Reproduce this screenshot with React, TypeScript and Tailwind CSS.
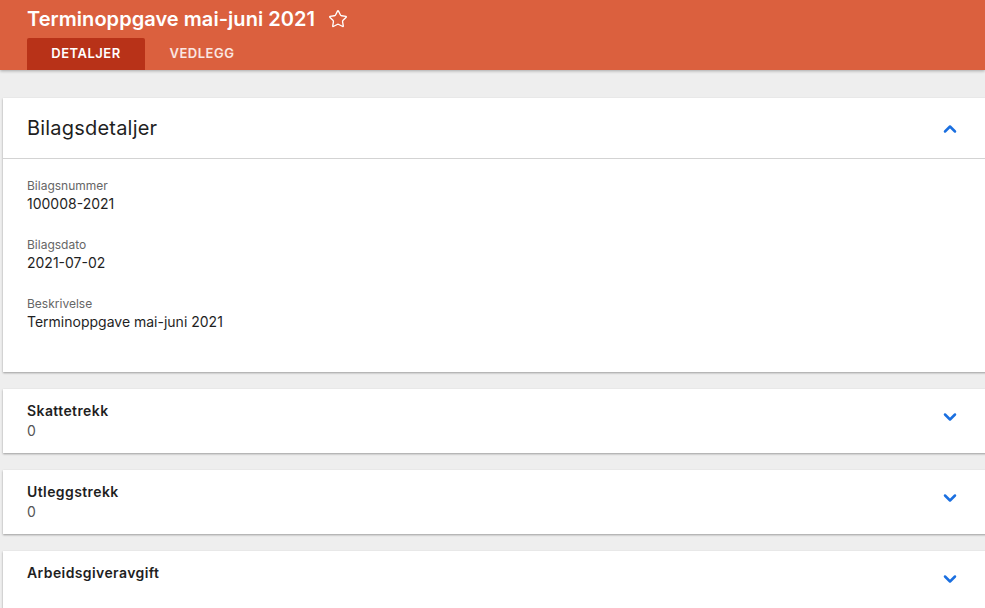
import { ChevronDown, ChevronUp, Star } from "lucide-react";

const fields = [
  { label: "Bilagsnummer", value: "100008-2021" },
  { label: "Bilagsdato", value: "2021-07-02" },
  { label: "Beskrivelse", value: "Terminoppgave mai-juni 2021" },
];

const sums = [
  { title: "Skattetrekk", value: "0" },
  { title: "Utleggstrekk", value: "0" },
  { title: "Arbeidsgiveravgift", value: "" },
];

const cardClass = "bg-white shadow-[0_1px_2px_rgba(0,0,0,0.35)] w-[1000px]";

export default function App() {
  return (
    <div className="h-[608px] overflow-hidden bg-[#eeeeee] font-['Inter',sans-serif]">
      <header className="relative z-10 h-[70px] bg-[#db603e] shadow-[0_1px_3px_rgba(0,0,0,0.3)] pl-[27px]">
        <div className="flex items-center h-[37px] pt-[1px]">
          <h1 className="text-[20px] font-semibold text-white tracking-[0.05px]">Terminoppgave mai-juni 2021</h1>
          <Star size={20} strokeWidth={1.6} className="ml-[13px] text-white" />
        </div>
        <nav className="flex h-[32px] mt-[1px]">
          <div className="flex w-[118px] items-center justify-center rounded-t-[2px] bg-[#b83218] text-[13px] font-semibold tracking-[0.5px] text-white">
            DETALJER
          </div>
          <div className="flex w-[114px] items-center justify-center text-[13px] font-semibold tracking-[0.5px] text-white/85">
            VEDLEGG
          </div>
        </nav>
      </header>

      <main className="pl-[3px] pt-[28px] flex flex-col gap-[17px]">
        <section className={cardClass}>
          <div className="flex h-[61px] items-center justify-between border-b border-[#d3d3d3] pl-[24px] w-[985px] pr-[28px]">
            <h2 className="text-[20px] tracking-[0.2px] text-[#1f1f1f]">Bilagsdetaljer</h2>
            <ChevronUp size={20} strokeWidth={3} className="mt-[1px] text-[#1a6fe0]" />
          </div>
          <div className="flex flex-col gap-[23px] pl-[24px] pt-[19px] pb-[40px]">
            {fields.map((f) => (
              <div key={f.label} className="flex flex-col">
                <span className="text-[12px] leading-[16px] text-[#666666]">{f.label}</span>
                <span className="text-[14px] leading-[20px] text-[#1f1f1f]">{f.value}</span>
              </div>
            ))}
          </div>
        </section>

        {sums.map((s) => (
          <section key={s.title} className={cardClass}>
            <div className="flex h-[64px] items-start justify-between pl-[24px] w-[985px] pr-[28px] pt-[12px]">
              <div className="flex flex-col">
                <span className="text-[14px] leading-[20px] font-semibold tracking-[0.4px] text-[#1f1f1f]">{s.title}</span>
                <span className="text-[14px] leading-[20px] text-[#555555]">{s.value || "\u00a0"}</span>
              </div>
              <ChevronDown size={20} strokeWidth={3} className="mt-[6px] text-[#1a6fe0]" />
            </div>
          </section>
        ))}
      </main>
    </div>
  );
}
